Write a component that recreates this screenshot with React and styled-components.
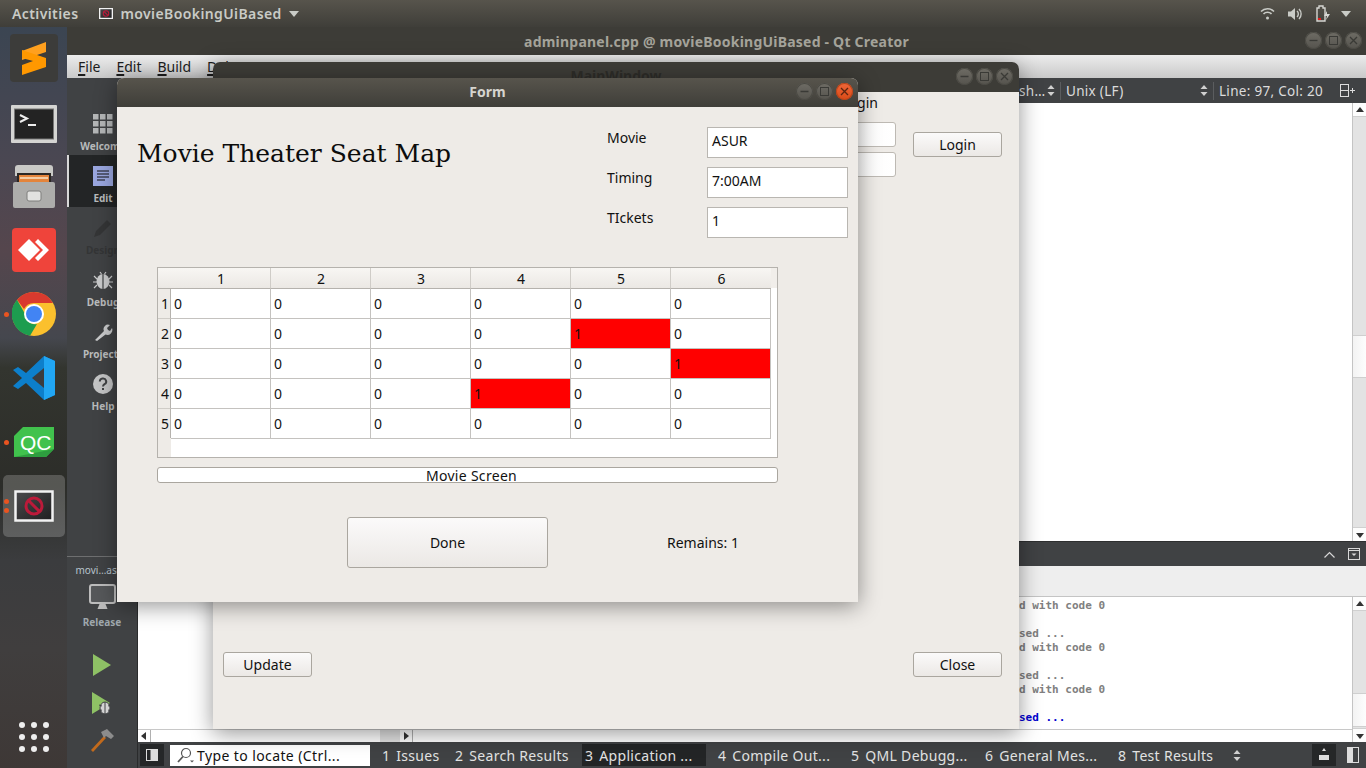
import React from 'react';
import styled, { createGlobalStyle } from 'styled-components';

const UI = '"Noto Sans", "Open Sans", sans-serif';

const GlobalStyle = createGlobalStyle`
  html, body { margin: 0; padding: 0; background: #3c3b37; }
  body { font-family: ${UI}; font-size: 14px; color: #111; overflow: hidden; }
  * { box-sizing: border-box; }
`;

/* desktop shell */
const Desktop = styled.div`
  position: relative;
  width: 1366px;
  height: 768px;
  display: flex;
  flex-direction: column;
  overflow: hidden;
`;

const TopBar = styled.div`
  height: 27px;
  flex: none;
  display: flex;
  align-items: center;
  padding: 0 15px 0 12px;
  background: linear-gradient(#57544c, #3f3e39);
  color: #c9cbc6;
  font-weight: 600;
  font-size: 14px;
  letter-spacing: 0.4px;
`;

const AppName = styled.div`
  margin-left: 21px;
  display: flex;
  align-items: center;
  gap: 7px;
`;

const Tray = styled.div`
  margin-left: auto;
  display: flex;
  align-items: center;
  gap: 13px;
  svg:last-child { margin-left: -3px; }
`;

const Workspace = styled.div`
  flex: 1;
  display: flex;
  min-height: 0;
`;

const Dock = styled.div`
  width: 67px;
  flex: none;
  display: flex;
  flex-direction: column;
  align-items: center;
  background: linear-gradient(#3b4552 0%, #4a4752 18%, #55464d 30%, #45474e 42%, #33352f 46%, #2c2d29 62%, #3b3c3e 72%, #403e3e 84%, #3e3836 100%);
`;

const DockItem = styled.div`
  position: relative;
  width: 62px;
  height: 62px;
  margin-bottom: 2px;
  padding-top: ${(p) => p.$pt || 0}px;
  display: flex;
  align-items: center;
  justify-content: center;
  border-radius: 5px;
  background: ${(p) => (p.$active ? 'rgba(255,255,255,0.2)' : 'transparent')};
`;

const RunDot = styled.i`
  position: absolute;
  left: 1px;
  top: ${(p) => p.$top}px;
  width: 5px;
  height: 5px;
  border-radius: 50%;
  background: #e95420;
`;

const AppsButton = styled.div`
  margin-top: auto;
  margin-bottom: 16px;
  display: grid;
  grid-template-columns: repeat(3, 6px);
  gap: 6px;
  i { width: 6px; height: 6px; border-radius: 50%; background: #eee; }
`;

/* qt creator */
const QtWindow = styled.div`
  flex: 1;
  display: flex;
  flex-direction: column;
  min-width: 0;
`;

const QtTitle = styled.div`
  height: 28px;
  flex: none;
  display: flex;
  align-items: center;
  justify-content: center;
  position: relative;
  background: #3d3c37;
  color: #a5a49b;
  font-weight: 700;
  font-size: 14px;
  letter-spacing: 0.22px;
`;

const TitleControls = styled.div`
  position: absolute;
  right: ${(p) => p.$right}px;
  top: ${(p) => p.$top}px;
  display: flex;
  gap: 3px;
`;

const Ctl = styled.span`
  width: 17px;
  height: 17px;
  border-radius: 50%;
  display: flex;
  align-items: center;
  justify-content: center;
  background: ${(p) => (p.$close ? 'linear-gradient(#f0673a, #d94a16)' : 'linear-gradient(#6e6c65, #55534d)')};
  box-shadow: inset 0 0 0 1px ${(p) => (p.$close ? '#b8441a' : '#4b4a44')};
  color: ${(p) => (p.$close ? '#5c2510' : '#3a3a36')};
`;

const MenuBar = styled.div`
  height: 23px;
  flex: none;
  display: flex;
  align-items: center;
  gap: 16px;
  padding-left: 11px;
  background: linear-gradient(#ececec, #c9c9c9);
  color: #1c1c1c;
  font-size: 14px;
  u { text-decoration-thickness: 2px; text-underline-offset: 2px; }
`;

const QtBody = styled.div`
  flex: 1;
  display: flex;
  min-height: 0;
`;

const ModeBar = styled.div`
  width: 71px;
  flex: none;
  display: flex;
  flex-direction: column;
  align-items: center;
  padding-top: 25px;
  background: #404244;
  border-right: 1px solid #2a2b2c;
  overflow: hidden;
`;

const Mode = styled.div`
  width: 100%;
  height: 52px;
  flex: none;
  display: flex;
  flex-direction: column;
  align-items: center;
  padding-top: 11px;
  gap: 6px;
  background: ${(p) => (p.$active ? '#232526' : 'transparent')};
  border-left: 2px solid ${(p) => (p.$active ? '#d8d8d8' : 'transparent')};
  color: ${(p) => (p.$dim ? '#343536' : '#b9bbbc')};
  font-size: 10px;
  font-weight: 700;
  line-height: 12px;
  white-space: nowrap;
`;

const KitDivider = styled.div`
  width: 100%;
  margin-top: 141px;
  border-top: 1px solid #6e6f70;
  padding-top: 6px;
  color: #b8c4cc;
  font-size: 10px;
  text-align: center;
  line-height: 14px;
`;

const ReleaseLabel = styled.div`
  color: #9fa8ad;
  font-size: 10px;
  font-weight: 700;
  margin-top: 4px;
`;

const ActionIcon = styled.div`
  margin-top: ${(p) => p.$mt}px;
  display: flex;
`;

const QtMain = styled.div`
  flex: 1;
  min-width: 0;
  display: flex;
  flex-direction: column;
`;

const EditorToolbar = styled.div`
  height: 25px;
  flex: none;
  display: flex;
  align-items: center;
  padding-left: 881px;
  background: #404244;
  color: #dcdcdc;
  font-size: 13.5px;
  letter-spacing: 0.3px;
`;

const ToolText = styled.span`
  width: ${(p) => p.$w}px;
  flex: none;
  white-space: nowrap;
`;

const Sep = styled.i`
  width: 1px;
  height: 18px;
  flex: none;
  background: #5b5d5f;
  margin: 0 5px;
`;

const ScrollPane = styled.div`
  flex: ${(p) => (p.$grow ? 1 : 'none')};
  height: ${(p) => (p.$h ? `${p.$h}px` : 'auto')};
  display: flex;
  min-height: 0;
  background: #fff;
`;

const PaneContent = styled.div`
  flex: 1;
  min-width: 0;
`;

const VScroll = styled.div`
  width: 14px;
  flex: none;
  display: flex;
  flex-direction: column;
  align-items: center;
  background: #e3e3e3;
  border-left: 1px solid #c4c4c4;
  color: #333;
`;

const ScrollArrow = styled.div`
  height: 14px;
  width: 100%;
  flex: none;
  display: flex;
  align-items: center;
  justify-content: center;
  background: #fdfdfd;
  border-bottom: ${(p) => (p.$top ? '1px solid #d0d0d0' : 'none')};
  border-top: ${(p) => (p.$top ? 'none' : '1px solid #d0d0d0')};
  margin-top: ${(p) => (p.$top ? 0 : 'auto')};
`;

const Handle = styled.div`
  width: 100%;
  height: ${(p) => p.$h}px;
  margin-top: ${(p) => p.$mt || 0}px;
  flex: none;
  background: linear-gradient(90deg, #f3f3f3, #fdfdfd);
  border-top: 1px solid #cfcfcf;
  border-bottom: 1px solid #cfcfcf;
`;

const PaneHeader = styled.div`
  height: 25px;
  flex: none;
  display: flex;
  align-items: center;
  justify-content: flex-end;
  gap: 13px;
  padding-right: 6px;
  background: #404244;
  border-top: 1px solid #2e2f30;
`;

const OutputTabs = styled.div`
  height: 31px;
  flex: none;
  background: #eeeeee;
  border-bottom: 1px solid #c4c4c4;
`;

const OutputLines = styled.div`
  padding: 2px 0 0 881px;
  font-family: "DejaVu Sans Mono", "Liberation Mono", monospace;
  font-weight: 700;
  font-size: 11px;
  line-height: 14px;
  height: 132px;
  white-space: pre;
`;

const OutputLine = styled.div`
  height: 14px;
  color: ${(p) => (p.$blue ? '#0000d0' : '#808080')};
`;

const HScroll = styled.div`
  height: 13px;
  display: flex;
  align-items: stretch;
  border-top: 1px solid #c8c8c8;
  background: #fff;
`;

const HArrow = styled.div`
  width: 13px;
  flex: none;
  display: flex;
  align-items: center;
  justify-content: center;
  border-right: 1px solid #b0b0b0;
  color: #333;
`;

const HThumb = styled.div`
  width: 20px;
  margin-left: 229px;
  background: #e2e2e2;
`;

const StatusBar = styled.div`
  height: 26px;
  flex: none;
  display: flex;
  align-items: center;
  padding: 0 7px 0 2px;
  background: #404244;
  color: #e2e2e2;
  font-size: 14px;
`;

const DarkSquare = styled.div`
  width: 24px;
  height: 22px;
  flex: none;
  margin-left: ${(p) => (p.$push ? 'auto' : '0')};
  display: flex;
  align-items: center;
  justify-content: center;
  background: #252728;
`;

const SideToggle = styled.div`
  margin-left: 11px;
  display: flex;
`;

const Locator = styled.div`
  width: 200px;
  height: 21px;
  margin: 0 7px 0 6px;
  flex: none;
  display: flex;
  align-items: center;
  gap: 1px;
  padding-left: 6px;
  background: #fff;
  color: #111;
  letter-spacing: 0.4px;
  white-space: nowrap;
  overflow: hidden;
`;

const OutTab = styled.div`
  width: ${(p) => p.$w}px;
  height: 22px;
  flex: none;
  margin-right: ${(p) => (p.$active ? 7 : 0)}px;
  display: flex;
  align-items: center;
  gap: 6px;
  padding-left: ${(p) => (p.$active ? 3 : 5)}px;
  white-space: nowrap;
  overflow: hidden;
  letter-spacing: 0.3px;
  background: ${(p) => (p.$active ? '#232526' : 'transparent')};
`;

/* floating app windows */
const AppWindow = styled.div`
  position: absolute;
  left: ${(p) => p.$x}px;
  top: ${(p) => p.$y}px;
  width: ${(p) => p.$w}px;
  height: ${(p) => p.$h}px;
  display: flex;
  flex-direction: column;
  background: #eeebe7;
  border-radius: 7px 7px 0 0;
  box-shadow: 0 4px 22px rgba(0, 0, 0, 0.42);
  overflow: hidden;
`;

const WinTitle = styled.div`
  position: relative;
  height: ${(p) => p.$h}px;
  flex: none;
  display: flex;
  align-items: center;
  justify-content: center;
  padding-bottom: 3px;
  font-weight: 700;
  font-size: 14px;
  color: ${(p) => p.$color};
  background: ${(p) => p.$bg};
`;

const MainBody = styled.div`
  flex: 1;
  display: flex;
  flex-direction: column;
  justify-content: space-between;
  padding: 1px 17px 52px 10px;
`;

const LoginRow = styled.div`
  display: flex;
  justify-content: flex-end;
  gap: 17px;
`;

const LoginFields = styled.div`
  display: flex;
  flex-direction: column;
  align-items: flex-end;
  gap: 5px;
`;

const LoginCaption = styled.div`
  height: 19px;
  margin: 0 18px 5px 0;
`;

const PlainInput = styled.div`
  width: 120px;
  height: 25px;
  background: linear-gradient(90deg, #f6f5f3, #fff);
  border: 1px solid #bdb9b3;
  border-radius: 3px;
`;

const PushButton = styled.button`
  width: ${(p) => p.$w || 89}px;
  height: ${(p) => p.$h || 25}px;
  margin-top: ${(p) => p.$mt || 0}px;
  flex: none;
  padding: 0;
  font: inherit;
  color: #111;
  border: 1px solid #aaa69f;
  border-radius: 3px;
  background: linear-gradient(#fbfafa, #ebe8e5);
`;

const BottomRow = styled.div`
  display: flex;
  justify-content: space-between;
`;

const FormBody = styled.div`
  flex: 1;
  padding: 20px 10px 0 20px;
`;

const FormHeader = styled.div`
  display: flex;
  justify-content: space-between;
  height: 140px;
`;

const PageTitle = styled.h1`
  margin: 12px 0 0;
  font-family: "DejaVu Serif", "Liberation Serif", serif;
  font-weight: 400;
  font-size: 25px;
  line-height: 30px;
  color: #0c0c0c;
`;

const Fields = styled.div`
  display: grid;
  grid-template-columns: 100px 141px;
  grid-auto-rows: 31px;
  row-gap: 9px;
`;

const FieldLabel = styled.div`
  line-height: 22px;
`;

const FieldBox = styled.div`
  background: #fff;
  border: 1px solid #b9b6b1;
  padding-left: 4px;
  line-height: 26px;
`;

const SeatTable = styled.div`
  margin-left: 20px;
  width: 621px;
  height: 191px;
  display: grid;
  grid-template-columns: 13px repeat(6, 100px);
  grid-template-rows: 21px repeat(5, 30px);
  align-content: start;
  background: #fff;
  border: 1px solid #b5b2ad;
  position: relative;
`;

const Corner = styled.div`
  background: linear-gradient(#f8f6f3, #ebe8e4);
  border-bottom: 1px solid #b5b2ad;
`;

const ColHead = styled.div`
  display: flex;
  align-items: center;
  justify-content: center;
  padding-left: 1px;
  background: linear-gradient(#f8f6f3, #ebe8e4);
  border-bottom: 1px solid #b5b2ad;
  border-right: ${(p) => (p.$last ? 'none' : '1px solid #cfccc7')};
`;

const RowHead = styled.div`
  display: flex;
  align-items: center;
  justify-content: flex-end;
  padding-right: 1px;
  background: #eeebe7;
  border-right: 1px solid #b5b2ad;
  border-bottom: 1px solid #cfccc7;
`;

const Seat = styled.div`
  display: flex;
  align-items: center;
  padding-left: 3px;
  background: ${(p) => (p.$taken ? '#ff0000' : '#fff')};
  border-right: 1px solid #c4c2bf;
  border-bottom: 1px solid #c4c2bf;
`;

const RowHeadFiller = styled.div`
  position: absolute;
  left: 0;
  bottom: 0;
  width: 13px;
  height: 19px;
  background: #eeebe7;
`;

const HeadFiller = styled.div`
  position: absolute;
  right: 0;
  top: 0;
  width: 6px;
  height: 20px;
  background: #f1eeea;
`;

const ScreenBar = styled.div`
  margin: 9px 0 0 20px;
  width: 621px;
  height: 16px;
  padding-left: 8px;
  background: #fff;
  border: 1px solid #aaa69f;
  border-radius: 3px;
  text-align: center;
  letter-spacing: 0.3px;
  line-height: 15px;
`;

const DoneRow = styled.div`
  margin: 34px 0 0 210px;
  display: flex;
  align-items: center;
`;

const Remains = styled.div`
  margin-left: 119px;
`;

/* drawings */
const Minus = () => (
  <svg width="9" height="9" viewBox="0 0 9 9"><path d="M0.5 4.5h8" stroke="currentColor" strokeWidth="1.3" /></svg>
);
const Square = () => (
  <svg width="9" height="9" viewBox="0 0 9 9"><rect x="0.5" y="0.5" width="8" height="8" fill="none" stroke="currentColor" /></svg>
);
const Cross = () => (
  <svg width="9" height="9" viewBox="0 0 9 9"><path d="M1 1l7 7M8 1l-7 7" stroke="currentColor" strokeWidth="1.3" /></svg>
);

const Controls = ({ close }) => (
  <>
    <Ctl><Minus /></Ctl>
    <Ctl><Square /></Ctl>
    <Ctl $close={close}><Cross /></Ctl>
  </>
);

const Caret = ({ size = 10, color = '#c9cbc6' }) => (
  <svg width={size} height={size * 0.6} viewBox="0 0 10 6"><path d="M0 0h10L5 6z" fill={color} /></svg>
);

const Updown = () => (
  <svg width="8" height="13" viewBox="0 0 8 13"><path d="M4 1l3.500 4h-7zM4 12L.5 8h7z" fill="#d0d0d0" /></svg>
);

const Sublime = () => (
  <svg width="48" height="48" viewBox="0 0 48 48">
    <rect width="48" height="48" rx="4" fill="#3c3c3a" />
    <path d="M36 8v10L12 26V17z" fill="#ffa01e" />
    <path d="M12 20l24 8v9l-24 8V35l11-4-11-3z" fill="#ff9800" transform="translate(0 -4)" />
  </svg>
);

const Terminal = () => (
  <svg width="46" height="38" viewBox="0 0 46 38">
    <rect width="46" height="38" rx="1" fill="#d5d5d3" />
    <rect x="3.500" y="4" width="39" height="30" fill="#232323" stroke="#777" />
    <path d="M9 10l7 3.500L9 17" fill="none" stroke="#eee" strokeWidth="2" />
    <path d="M17 20h8" stroke="#eee" strokeWidth="2" />
  </svg>
);

const Files = () => (
  <svg width="44" height="44" viewBox="0 0 44 44">
    <path d="M3 3q0-3 3-3h32q3 0 3 3v8H3z" fill="#c9c9c6" />
    <rect x="5" y="8" width="34" height="14" fill="#2b2724" />
    <rect x="7" y="10" width="30" height="10" fill="#e4843b" />
    <path d="M8 13h28" stroke="#f7e3c9" strokeWidth="1.500" />
    <rect x="1" y="17" width="42" height="26" rx="2" fill="#adadab" />
    <rect x="15" y="26" width="14" height="10" rx="2" fill="#e2e2e0" stroke="#7f7f7d" />
  </svg>
);

const AnyDesk = () => (
  <svg width="44" height="44" viewBox="0 0 44 44">
    <rect width="44" height="44" rx="4" fill="#ef443b" />
    <path d="M17 11l11 11-11 11L6 22z" fill="#fff" />
    <path d="M26 11l11 11-11 11 -3-3 8-8-8-8z" fill="#fff" />
  </svg>
);

const Chrome = () => (
  <svg width="44" height="44" viewBox="0 0 44 44">
    <circle cx="22" cy="22" r="22" fill="#fbc02d" />
    <path d="M22 0A22 22 0 0 1 41 11H22a11 11 0 0 0-10 6L5 7.800A22 22 0 0 1 22 0z" fill="#d93a2e" />
    <path d="M5 7.800l9.500 16.700A8.500 8.500 0 0 0 25 32l-7 11.700A22 22 0 0 1 5 7.800z" fill="#1d9d4f" />
    <circle cx="22" cy="22" r="10" fill="#fff" />
    <circle cx="22" cy="22" r="8" fill="#4284f4" />
  </svg>
);

const VsCode = () => (
  <svg width="42" height="44" viewBox="0 0 42 44">
    <path d="M31 0l11 5v34l-11 5-18-17-8 6-5-3 9-8-9-8 5-3 8 6z" fill="#0d7fcb" />
    <path d="M31 0l11 5v34l-11 5z" fill="#21a6f3" />
    <path d="M31 12L19 22l12 10z" fill="#3b3c3e" />
  </svg>
);

const QtLogo = () => (
  <svg width="40" height="30" viewBox="0 0 40 30">
    <path d="M9 0h31v22l-8 8H0V9z" fill="#41c24d" />
    <path d="M40 22l-8 8H0L40 22z" fill="#2e9e3f" />
    <text x="6" y="23" fill="#fff" fontFamily="Liberation Sans, sans-serif" fontSize="21">QC</text>
  </svg>
);

const BrokenApp = ({ w = 40, h = 32, stroke = 2.500 }) => (
  <svg width={w} height={h} viewBox="0 0 40 32">
    <defs>
      <linearGradient id="brokenScreen" x1="0" y1="0" x2="1" y2="1">
        <stop offset="0" stopColor="#4a4a4c" />
        <stop offset="1" stopColor="#1f1f20" />
      </linearGradient>
    </defs>
    <rect x="1.500" y="1.500" width="37" height="29" fill="url(#brokenScreen)" stroke="#f2f2f2" strokeWidth={stroke} />
    <circle cx="20" cy="16" r="8" fill="none" stroke="#bc1a3a" strokeWidth="3" />
    <path d="M14.500 10.500l11 11" stroke="#bc1a3a" strokeWidth="3" />
  </svg>
);

const ModeIcon = {
  welcome: (
    <svg width="20" height="20" viewBox="0 0 20 20" fill="#b4b6b7">
      {[0, 7, 14].flatMap((y) => [0, 7, 14].map((x) => <rect key={`${x}${y}`} x={x} y={y} width="5.500" height="5.500" />))}
    </svg>
  ),
  edit: (
    <svg width="20" height="20" viewBox="0 0 20 20">
      <rect width="20" height="20" fill="#9aa7e0" />
      <path d="M4 5h12M4 8h12M4 11h12M4 14h8" stroke="#111" strokeWidth="1.200" />
    </svg>
  ),
  design: (
    <svg width="20" height="20" viewBox="0 0 20 20"><path d="M1 19l2-6L14 2l4 4L7 17z" fill="#343536" /></svg>
  ),
  debug: (
    <svg width="20" height="20" viewBox="0 0 20 20" fill="#c9cacb">
      <ellipse cx="10" cy="11.500" rx="6.500" ry="7.500" />
      <path d="M10 3v17" stroke="#404244" strokeWidth="1.200" />
      <path d="M1 6l3 3M19 6l-3 3M0 12h4M20 12h-4M1 18l3-3M19 18l-3-3M7 2l1.500 2M13 2l-1.500 2" stroke="#c9cacb" strokeWidth="1.200" />
    </svg>
  ),
  project: (
    <svg width="20" height="20" viewBox="0 0 20 20">
      <path d="M2 18l9-9a4.500 4.500 0 0 1 6-6l-3 3 1 2 2 1 2-3a5 5 0 0 1-6.500 6.500L4 19z" fill="#c9cacb" />
    </svg>
  ),
  help: (
    <svg width="20" height="20" viewBox="0 0 20 20">
      <circle cx="10" cy="10" r="10" fill="#c4c5c6" />
      <path d="M6.800 7.500a3.200 3 0 1 1 4.700 2.700c-1 .6-1.500 1-1.500 2.300" fill="none" stroke="#404244" strokeWidth="2" />
      <rect x="9" y="14" width="2" height="2" fill="#404244" />
    </svg>
  ),
};

const Monitor = () => (
  <svg width="27" height="27" viewBox="0 0 27 27">
    <rect x="1" y="1" width="25" height="18" rx="2" fill="#56585a" stroke="#bdbdbd" strokeWidth="2" />
    <path d="M10.500 20h6l2 5h-10z" fill="#bdbdbd" />
  </svg>
);

const RunIcon = () => (
  <svg width="20" height="24" viewBox="0 0 20 24"><path d="M1 1l18 11L1 23z" fill="#8ec165" /></svg>
);

const RunDebugIcon = () => (
  <svg width="22" height="24" viewBox="0 0 22 24">
    <path d="M1 1l18 11L1 23z" fill="#8ec165" />
    <ellipse cx="14" cy="17" rx="5" ry="6" fill="#d3d3d3" stroke="#404244" />
    <path d="M14 11v12M8 14l3 1M20 14l-3 1M8 20l3-1M20 20l-3-1" stroke="#404244" />
  </svg>
);

const Hammer = () => (
  <svg width="24" height="24" viewBox="0 0 24 24">
    <path d="M1 22L14 8l2 2L3 24z" fill="#c26a1c" />
    <path d="M11 4l6-3 7 7-3 3-5-3-2 2z" fill="#8c8c8c" />
  </svg>
);

const Wifi = () => (
  <svg width="15" height="14" viewBox="0 0 15 14" fill="none" stroke="#c9cbc6" strokeWidth="1.600">
    <path d="M1 4.500a9 9 0 0 1 13 0M3.500 7a5.500 5.500 0 0 1 8 0" />
    <circle cx="7.500" cy="11" r="1.500" fill="#c9cbc6" stroke="none" />
  </svg>
);

const Volume = () => (
  <svg width="15" height="14" viewBox="0 0 15 14">
    <path d="M0 4.500h3L7 1v12L3 9.500H0z" fill="#c9cbc6" />
    <path d="M9 4a4 4 0 0 1 0 6M11 2a7 7 0 0 1 0 10" fill="none" stroke="#c9cbc6" strokeWidth="1.400" />
  </svg>
);

const Battery = () => (
  <svg width="15" height="17" viewBox="0 0 15 17">
    <path d="M1 3h2V1h4v2h2v13H1z" fill="none" stroke="#d6d6d2" strokeWidth="1.400" />
    <rect x="2" y="13" width="3" height="2" fill="#e01b1b" />
    <path d="M11 6L8 11h3l-1 4 4-6h-3z" fill="#d6d6d2" />
  </svg>
);

const SplitIcon = () => (
  <svg width="15" height="13" viewBox="0 0 15 13" fill="none" stroke="#dcdcdc">
    <rect x="0.500" y="0.500" width="8" height="12" />
    <path d="M0.500 6.500h8M10 6.500h5M12.500 4v5" />
  </svg>
);

const Tri = ({ dir }) => (
  <svg width="8" height="8" viewBox="0 0 8 8">
    <path
      d={{ up: 'M4 1l4 5H0z', down: 'M4 7L0 2h8z', left: 'M1 4l5-4v8z', right: 'M7 4L2 0v8z' }[dir]}
      fill="#333"
    />
  </svg>
);

const Chevron = () => (
  <svg width="11" height="7" viewBox="0 0 11 7" fill="none" stroke="#d8d8d8" strokeWidth="1.200"><path d="M0.500 6.500l5-5 5 5" /></svg>
);

const PaneClose = () => (
  <svg width="12" height="12" viewBox="0 0 12 12">
    <rect x="0.500" y="0.500" width="11" height="11" fill="#404244" stroke="#d8d8d8" />
    <path d="M0 2.500h12" stroke="#d8d8d8" />
    <path d="M3.500 5.500h5L6 8z" fill="#d8d8d8" />
  </svg>
);

const Search = () => (
  <svg width="20" height="16" viewBox="0 0 20 16" fill="none" stroke="#555">
    <circle cx="10" cy="6" r="4.500" strokeWidth="1.200" />
    <path d="M7 9.500L2 15" strokeWidth="1.800" />
    <path d="M14 13.500h4l-2 2z" fill="#555" stroke="none" />
  </svg>
);

const SidebarToggle = () => (
  <svg width="12" height="12" viewBox="0 0 12 12">
    <rect x="0.500" y="0.500" width="11" height="11" fill="#ddd" stroke="#ddd" />
    <rect x="1" y="1" width="3.500" height="10" fill="#252728" />
  </svg>
);

const taken = { '2-5': true, '3-6': true, '4-4': true };
const rows = [1, 2, 3, 4, 5];
const cols = [1, 2, 3, 4, 5, 6];

const outputLines = [
  { text: 'd with code 0' },
  { text: ' ' },
  { text: 'sed ...' },
  { text: 'd with code 0' },
  { text: ' ' },
  { text: 'sed ...' },
  { text: 'd with code 0' },
  { text: ' ' },
  { text: 'sed ...', blue: true },
];

const tabs = [
  { n: 1, label: 'Issues', w: 73 },
  { n: 2, label: 'Search Results', w: 132 },
  { n: 3, label: 'Application ...', w: 124, active: true },
  { n: 4, label: 'Compile Out...', w: 133 },
  { n: 5, label: 'QML Debugg...', w: 134 },
  { n: 6, label: 'General Mes...', w: 133 },
  { n: 8, label: 'Test Results', w: 120 },
];

export default function App() {
  return (
    <Desktop>
      <GlobalStyle />
      <TopBar>
        <span>Activities</span>
        <AppName>
          <BrokenApp w={14} h={11} stroke={4} />
          <span>movieBookingUiBased</span>
          <Caret />
        </AppName>
        <Tray>
          <Wifi />
          <Volume />
          <Battery />
          <Caret />
        </Tray>
      </TopBar>

      <Workspace>
        <Dock>
          <DockItem><Sublime /></DockItem>
          <DockItem $pt={4}><Terminal /></DockItem>
          <DockItem $pt={2}><Files /></DockItem>
          <DockItem><AnyDesk /></DockItem>
          <DockItem><RunDot $top={29} /><Chrome /></DockItem>
          <DockItem><VsCode /></DockItem>
          <DockItem><RunDot $top={29} /><QtLogo /></DockItem>
          <DockItem $active>
            <RunDot $top={24} />
            <RunDot $top={33} />
            <BrokenApp />
          </DockItem>
          <AppsButton>
            {Array.from({ length: 9 }, (_, i) => <i key={i} />)}
          </AppsButton>
        </Dock>

        <QtWindow>
          <QtTitle>
            adminpanel.cpp @ movieBookingUiBased - Qt Creator
            <TitleControls $right={4} $top={5}><Controls /></TitleControls>
          </QtTitle>
          <MenuBar>
            <span><u>F</u>ile</span>
            <span><u>E</u>dit</span>
            <span><u>B</u>uild</span>
            <span><u>D</u>ebug</span>
          </MenuBar>
          <QtBody>
            <ModeBar>
              <Mode>{ModeIcon.welcome}<span>Welcome</span></Mode>
              <Mode $active>{ModeIcon.edit}<span>Edit</span></Mode>
              <Mode $dim>{ModeIcon.design}<span>Design</span></Mode>
              <Mode>{ModeIcon.debug}<span>Debug</span></Mode>
              <Mode>{ModeIcon.project}<span>Projects</span></Mode>
              <Mode>{ModeIcon.help}<span>Help</span></Mode>
              <KitDivider>movi…ased</KitDivider>
              <ActionIcon $mt={7}><Monitor /></ActionIcon>
              <ReleaseLabel>Release</ReleaseLabel>
              <ActionIcon $mt={24}><RunIcon /></ActionIcon>
              <ActionIcon $mt={14}><RunDebugIcon /></ActionIcon>
              <ActionIcon $mt={13}><Hammer /></ActionIcon>
            </ModeBar>

            <QtMain>
              <EditorToolbar>
                <ToolText $w={28}>sh…</ToolText>
                <Updown />
                <Sep />
                <ToolText $w={134}>Unix (LF)</ToolText>
                <Updown />
                <Sep />
                <ToolText $w={121}>Line: 97, Col: 20</ToolText>
                <SplitIcon />
              </EditorToolbar>
              <ScrollPane $h={438}>
                <PaneContent />
                <VScroll>
                  <ScrollArrow $top><Tri dir="up" /></ScrollArrow>
                  <Handle $h={43} $mt={218} />
                  <ScrollArrow><Tri dir="down" /></ScrollArrow>
                </VScroll>
              </ScrollPane>
              <PaneHeader>
                <Chevron />
                <PaneClose />
              </PaneHeader>
              <OutputTabs />
              <ScrollPane $grow>
                <PaneContent>
                  <OutputLines>
                    {outputLines.map((l, i) => (
                      <OutputLine key={i} $blue={l.blue}>{l.text}</OutputLine>
                    ))}
                  </OutputLines>
                  <HScroll>
                    <HArrow $left><Tri dir="left" /></HArrow>
                    <HThumb />
                    <HArrow><Tri dir="right" /></HArrow>
                  </HScroll>
                </PaneContent>
                <VScroll>
                  <ScrollArrow $top><Tri dir="up" /></ScrollArrow>
                  <Handle $h={34} $mt={82} />
                  <ScrollArrow><Tri dir="down" /></ScrollArrow>
                </VScroll>
              </ScrollPane>
              <StatusBar>
                <DarkSquare><SidebarToggle /></DarkSquare>
                <Locator><Search /><span>Type to locate (Ctrl...</span></Locator>
                {tabs.map((t) => (
                  <OutTab key={t.n} $w={t.w} $active={t.active}>
                    <span>{t.n}</span><span>{t.label}</span>
                  </OutTab>
                ))}
                <Updown />
                <DarkSquare $push>
                  <svg width="12" height="14" viewBox="0 0 12 14"><path d="M6 0l2 3H4z" fill="#ddd" /><rect x="1" y="7" width="10" height="5" fill="#ddd" /></svg>
                </DarkSquare>
                <SideToggle>
                  <svg width="12" height="16" viewBox="0 0 12 16">
                    <rect x="0.500" y="0.500" width="11" height="15" fill="none" stroke="#ddd" />
                    <rect x="1" y="1" width="5" height="14" fill="#ddd" />
                  </svg>
                </SideToggle>
              </StatusBar>
            </QtMain>
          </QtBody>
        </QtWindow>
      </Workspace>

      {/* MainWindow, mostly under the Form window */}
      <AppWindow $x={213} $y={62} $w={806} $h={667}>
        <WinTitle $h={30} $color="#2d2c28" $bg="#3d3c37">
          MainWindow
          <TitleControls $right={6} $top={6}><Controls /></TitleControls>
        </WinTitle>
        <MainBody>
          <LoginRow>
            <LoginFields>
              <LoginCaption>Admin Login</LoginCaption>
              <PlainInput />
              <PlainInput />
            </LoginFields>
            <PushButton $mt={39}>Login</PushButton>
          </LoginRow>
          <BottomRow>
            <PushButton>Update</PushButton>
            <PushButton>Close</PushButton>
          </BottomRow>
        </MainBody>
      </AppWindow>

      {/* seat map form */}
      <AppWindow $x={117} $y={78} $w={741} $h={524}>
        <WinTitle $h={29} $color="#d6d5cf" $bg="linear-gradient(#57544c, #3f3e39)">
          Form
          <TitleControls $right={5} $top={5}><Controls close /></TitleControls>
        </WinTitle>
        <FormBody>
          <FormHeader>
            <PageTitle>Movie Theater Seat Map</PageTitle>
            <Fields>
              <FieldLabel>Movie</FieldLabel>
              <FieldBox>ASUR</FieldBox>
              <FieldLabel>Timing</FieldLabel>
              <FieldBox>7:00AM</FieldBox>
              <FieldLabel>TIckets</FieldLabel>
              <FieldBox>1</FieldBox>
            </Fields>
          </FormHeader>
          <SeatTable>
            <Corner />
            {cols.map((c) => <ColHead key={c} $last={c === 6}>{c}</ColHead>)}
            {rows.map((r) => (
              <React.Fragment key={r}>
                <RowHead>{r}</RowHead>
                {cols.map((c) => (
                  <Seat key={c} $taken={taken[`${r}-${c}`]}>{taken[`${r}-${c}`] ? 1 : 0}</Seat>
                ))}
              </React.Fragment>
            ))}
            <RowHeadFiller />
            <HeadFiller />
          </SeatTable>
          <ScreenBar>Movie Screen</ScreenBar>
          <DoneRow>
            <PushButton $w={201} $h={51}>Done</PushButton>
            <Remains>Remains: 1</Remains>
          </DoneRow>
        </FormBody>
      </AppWindow>
    </Desktop>
  );
}
